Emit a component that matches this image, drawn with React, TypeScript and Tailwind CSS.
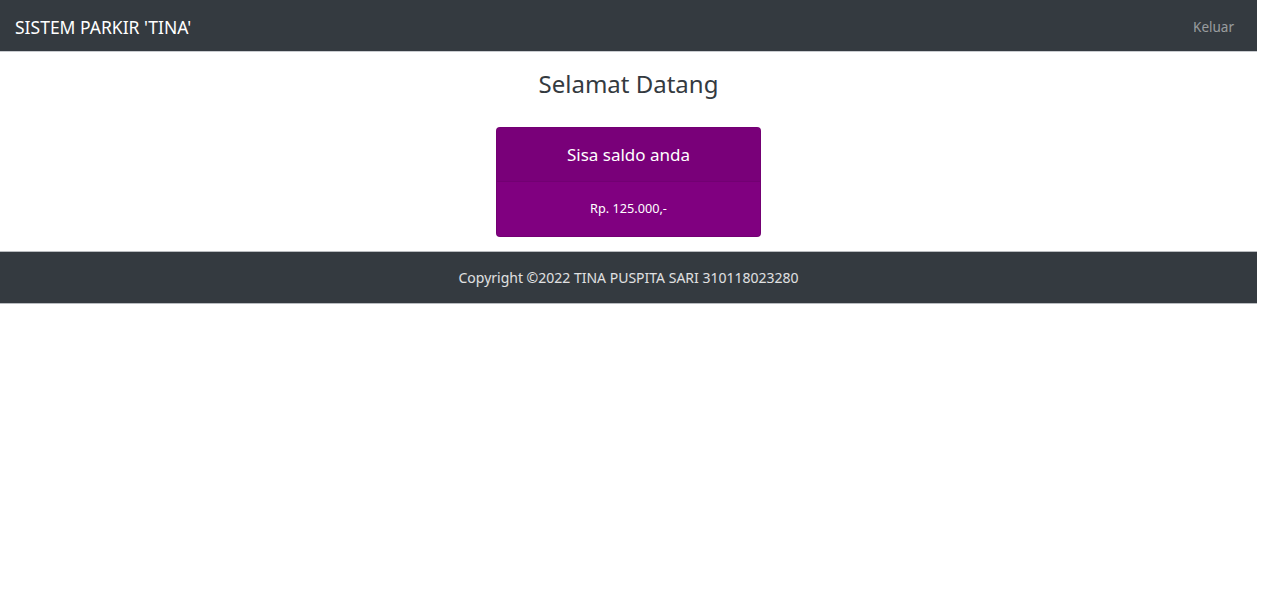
import React from 'react';

const font = { fontFamily: '"Noto Sans", "Open Sans", sans-serif' };

export default function App() {
  return (
    <div className="w-[1257px] bg-white" style={font}>
      {/* Top navbar */}
      <nav className="flex h-[52px] items-center justify-between border-b border-[#c9ccd0] bg-[#343a40] pl-[15px] pr-[23px] pt-[4px]">
        <span className="text-[17.5px] text-white">SISTEM PARKIR 'TINA'</span>
        <a className="text-[13.5px] text-white/50">Keluar</a>
      </nav>

      <main className="flex flex-col items-center pb-[14px]">
        <h3 className="mt-[15px] text-[24px] leading-[34px] text-[#343a40]">Selamat Datang</h3>

        {/* Balance card */}
        <div className="mt-[26px] w-[265px] overflow-hidden rounded-[4px] border border-black/10 bg-[#800080] text-center text-white">
          <div className="flex h-[54px] items-center justify-center border-b border-black/5 bg-[#790079] text-[17px]">
            Sisa saldo anda
          </div>
          <div className="flex h-[54px] items-center justify-center text-[12.7px]">Rp. 125.000,-</div>
        </div>
      </main>

      {/* Footer */}
      <footer className="flex h-[53px] items-center justify-center border-y border-[#b9bcc0] bg-[#343a40] text-[14px] text-white/85">
        Copyright ©2022 TINA PUSPITA SARI 310118023280
      </footer>
    </div>
  );
}
